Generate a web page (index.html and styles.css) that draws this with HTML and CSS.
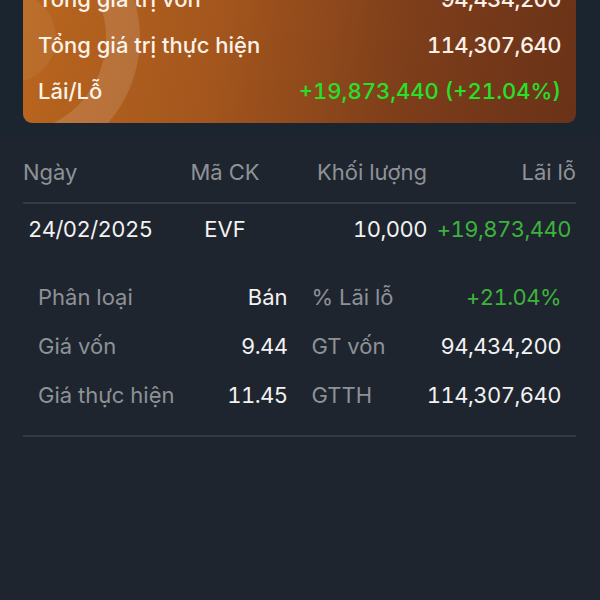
FILE: index.html
```html
<!DOCTYPE html>
<html>
<head>
  <meta charset="utf-8">
  <title>Lãi lỗ đã thực hiện</title>
  <link rel="stylesheet" href="styles.css">
</head>
<body>
  <div class="summary">
    <div class="card">
      <svg class="card-deco" width="200" height="150" viewBox="0 0 200 150">
        <circle cx="-12" cy="62" r="112" fill="none" stroke="#ffffff" stroke-width="34" stroke-opacity="0.13"/>
        <circle cx="-12" cy="62" r="45" fill="#ffffff" fill-opacity="0.06"/>
      </svg>
      <div class="card-row">
        <span>Tổng giá trị vốn</span>
        <span class="num">94,434,200</span>
      </div>
      <div class="card-row">
        <span>Tổng giá trị thực hiện</span>
        <span class="num">114,307,640</span>
      </div>
      <div class="card-row">
        <span>Lãi/Lỗ</span>
        <span class="up-bright">+19,873,440 (+21.04%)</span>
      </div>
    </div>
  </div>

  <div class="list">
    <div class="list-head">
      <span>Ngày</span>
      <span class="center">Mã CK</span>
      <span class="right">Khối lượng</span>
      <span class="right">Lãi lỗ</span>
    </div>

    <div class="item">
      <div class="item-main">
        <span class="date num">24/02/2025</span>
        <span class="center">EVF</span>
        <span class="right num">10,000</span>
        <span class="right pl up num">+19,873,440</span>
      </div>
      <div class="item-detail">
        <div class="pair"><span class="lbl">Phân loại</span><span>Bán</span></div>
        <div class="pair"><span class="lbl">% Lãi lỗ</span><span class="up num">+21.04%</span></div>
        <div class="pair"><span class="lbl">Giá vốn</span><span class="num">9.44</span></div>
        <div class="pair"><span class="lbl">GT vốn</span><span class="num">94,434,200</span></div>
        <div class="pair"><span class="lbl">Giá thực hiện</span><span class="num">11.45</span></div>
        <div class="pair"><span class="lbl">GTTH</span><span class="num">114,307,640</span></div>
      </div>
    </div>
  </div>
</body>
</html>
```

FILE: styles.css
```css
body {
  margin: 0;
  background: #1f252e;
  color: #f2f2f2;
  font-family: Inter, "Noto Sans", sans-serif;
  font-size: 22px;
  font-variant-numeric: tabular-nums;
  overflow: hidden;
}

.num {
  letter-spacing: -0.55px;
}

.summary {
  background: #1b2530;
  padding: 0 24px 13px 23px;
}

.card {
  position: relative;
  overflow: hidden;
  margin-top: -24px;
  padding: 0 15px 9px;
  border-radius: 0 0 9px 9px;
  background: linear-gradient(100deg, #b9661e 0%, #a4561d 35%, #7c3d1a 70%, #6a3218 100%);
}

.card-deco {
  position: absolute;
  left: 0;
  top: 0;
}

.card-row {
  position: relative;
  display: flex;
  justify-content: space-between;
  align-items: center;
  height: 46px;
  color: #fbf3ea;
  font-weight: 500;
}

.up-bright {
  color: #27e02a;
}

.up {
  color: #3cb33c;
}

.list {
  padding: 0 24px 0 23px;
}

.list-head,
.item-main {
  display: grid;
  grid-template-columns: 146px 112px 1fr 149px;
  align-items: center;
}

.list-head {
  height: 60px;
  padding-top: 6px;
  color: #8d9298;
  border-bottom: 2px solid #333a43;
}

.center {
  text-align: center;
}

.right {
  text-align: right;
}

.item-main {
  height: 50px;
}

.item-main .date {
  padding-left: 5px;
}

.item-main .pl {
  padding-right: 5px;
}

.item-detail {
  display: grid;
  grid-template-columns: 1fr 1fr;
  column-gap: 24px;
  padding: 18px 15px 16px;
  border-bottom: 2px solid #333a43;
}

.pair {
  display: flex;
  justify-content: space-between;
  align-items: center;
  height: 49px;
}

.lbl {
  color: #8d9298;
}
```
